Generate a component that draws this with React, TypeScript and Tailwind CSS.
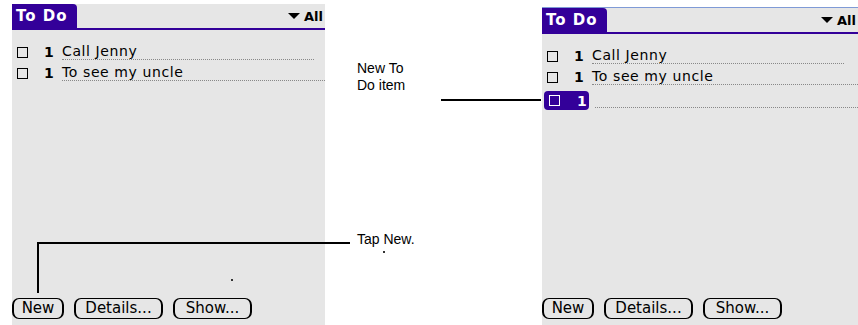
const palm = { fontFamily: '"DejaVu Sans", sans-serif' }

const Row = ({ text, active, short }: { text?: string; active?: boolean; short?: boolean }) => {
	return (
		<div className={`flex items-end ${active ? "h-[25px]" : "h-[21px]"}`}>
			{active ? (
				<div className="flex items-center h-[19px] w-[45px] pl-[5px] bg-[#330099] rounded-[4px] text-white shrink-0">
					<span className="w-[11px] h-[11px] border-[1.5px] border-white shrink-0" />
					<span className="ml-[17px] font-bold text-[14px] leading-none">1</span>
				</div>
			) : (
				<div className="flex items-center pl-[3px] w-[48px] h-[16px] shrink-0">
					<span className="w-[11px] h-[11px] border-[1.5px] border-black shrink-0" />
					<span className="ml-[16px] font-bold text-[14px] leading-none">1</span>
				</div>
			)}
			<div className={`h-[17px] border-b border-dotted border-[#888] text-[14px] leading-[16px] tracking-[0.6px] whitespace-nowrap ${active ? "ml-[6px] mb-[2px] flex-1" : ""} ${short ? "w-[252px]" : "flex-1"}`}>
				{text}
			</div>
		</div>
	)
}

const Btn = ({ label, w }: { label: string; w: string }) => {
	return (
		<div className={`${w} h-[21px] border border-black border-x-2 rounded-[7px] flex items-center justify-center text-[15px] leading-none`}>
			{label}
		</div>
	)
}

const Screen = ({ rows, top }: { rows: { text?: string; active?: boolean; short?: boolean }[]; top?: boolean }) => {
	return (
		<div style={palm} className={`flex flex-col h-full bg-[#e6e6e6] overflow-hidden text-black ${top ? "border-t border-[#7f9ad6]" : ""}`}>
			<header className="flex justify-between items-end h-[26px] border-b-2 border-[#330099]">
				<div className="h-[24px] w-[65px] bg-[#330099] rounded-tr-[4px] flex items-center pl-[4px] text-white font-bold text-[15px] tracking-[1px]">
					To Do
				</div>
				<div className="flex items-center gap-[4px] h-[24px] pr-[2px] font-bold text-[13px] leading-none">
					<svg width="12" height="6" viewBox="0 0 12 6">
						<path d="M0 0h12L6 6z" fill="black" />
					</svg>
					<span>All</span>
				</div>
			</header>
			<div className="flex flex-col mt-[9px] pl-[2px]">
				{rows.map((r, i) => (
					<Row key={i} text={r.text} active={r.active} short={r.short} />
				))}
			</div>
			<div className="flex-1" />
			<footer className="flex gap-[10px] mb-[6px]">
				<Btn label="New" w="w-[52px]" />
				<Btn label="Details..." w="w-[89px]" />
				<Btn label="Show..." w="w-[79px]" />
			</footer>
		</div>
	)
}

export default function App() {
	return (
		<div className="relative w-[858px] h-[325px] bg-white flex overflow-hidden" style={{ fontFamily: '"Liberation Sans", Arial, sans-serif' }}>
			<div className="ml-[12px] mt-[4px] w-[313px] h-[321px]">
				<Screen rows={[{ text: "Call Jenny", short: true }, { text: "To see my uncle" }]} />
			</div>
			<div className="w-[217px] flex flex-col pl-[32px] text-[14px] leading-[17px] text-black">
				<p className="mt-[60px]">New To<br />Do item</p>
				<p className="mt-[137px]">Tap New.</p>
			</div>
			<div className="mt-[7px] w-[316px] h-[318px]">
				<Screen top rows={[{ text: "Call Jenny", short: true }, { text: "To see my uncle" }, { active: true }]} />
			</div>

			{/* callout lines */}
			<div className="absolute left-[441px] top-[99px] w-[100px] h-[2px] bg-black" />
			<div className="absolute left-[37px] top-[242px] w-[313px] h-[2px] bg-black" />
			<div className="absolute left-[37px] top-[242px] w-[2px] h-[51px] bg-black" />
			<div className="absolute left-[231px] top-[279px] w-[2px] h-[2px] bg-[#333]" />
			<div className="absolute left-[383px] top-[251px] w-[2px] h-[2px] bg-[#333]" />
		</div>
	)
}
